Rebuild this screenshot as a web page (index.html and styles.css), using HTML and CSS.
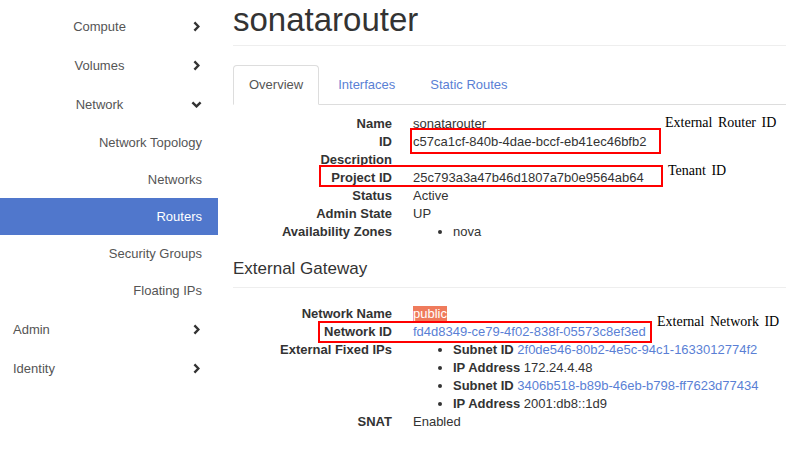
FILE: index.html
```html
<!DOCTYPE html>
<html lang="en">
<head>
<meta charset="utf-8">
<title>sonatarouter</title>
<link rel="stylesheet" href="styles.css">
</head>
<body>
<div class="page">
  <aside class="sidebar">
    <ul class="nav">
      <li class="nav-group centered"><span class="label">Compute</span><span class="chev"><svg width="7" height="11" viewBox="0 0 7 11"><polyline points="1.4,1.4 5.4,5.5 1.4,9.6" fill="none" stroke="#333" stroke-width="2.4"/></svg></span></li>
      <li class="nav-group centered"><span class="label">Volumes</span><span class="chev"><svg width="7" height="11" viewBox="0 0 7 11"><polyline points="1.4,1.4 5.4,5.5 1.4,9.6" fill="none" stroke="#333" stroke-width="2.4"/></svg></span></li>
      <li class="nav-group centered"><span class="label">Network</span><span class="chev"><svg width="11" height="7" viewBox="0 0 11 7"><polyline points="1.4,1.4 5.5,5.4 9.6,1.4" fill="none" stroke="#333" stroke-width="2.4"/></svg></span></li>
      <li class="nav-sub">Network Topology</li>
      <li class="nav-sub">Networks</li>
      <li class="nav-sub active">Routers</li>
      <li class="nav-sub">Security Groups</li>
      <li class="nav-sub last">Floating IPs</li>
      <li class="nav-group"><span class="label">Admin</span><span class="chev"><svg width="7" height="11" viewBox="0 0 7 11"><polyline points="1.4,1.4 5.4,5.5 1.4,9.6" fill="none" stroke="#333" stroke-width="2.4"/></svg></span></li>
      <li class="nav-group"><span class="label">Identity</span><span class="chev"><svg width="7" height="11" viewBox="0 0 7 11"><polyline points="1.4,1.4 5.4,5.5 1.4,9.6" fill="none" stroke="#333" stroke-width="2.4"/></svg></span></li>
    </ul>
  </aside>
  <main class="content">
    <div class="page-header"><h1>sonatarouter</h1></div>
    <ul class="tabs">
      <li><a class="tab active">Overview</a></li>
      <li><a class="tab">Interfaces</a></li>
      <li><a class="tab">Static Routes</a></li>
    </ul>
    <dl class="info first">
      <dt>Name</dt><dd>sonatarouter</dd>
      <dt>ID</dt><dd>c57ca1cf-840b-4dae-bccf-eb41ec46bfb2</dd>
      <dt>Description</dt><dd></dd>
      <dt>Project ID</dt><dd>25c793a3a47b46d1807a7b0e9564ab64</dd>
      <dt>Status</dt><dd>Active</dd>
      <dt>Admin State</dt><dd>UP</dd>
      <dt>Availability Zones</dt><dd><ul class="bullets"><li>nova</li></ul></dd>
    </dl>
    <div class="section-header"><h4>External Gateway</h4></div>
    <dl class="info">
      <dt>Network Name</dt><dd><span class="hl">public</span></dd>
      <dt>Network ID</dt><dd><a class="link">fd4d8349-ce79-4f02-838f-05573c8ef3ed</a></dd>
      <dt>External Fixed IPs</dt>
      <dd>
        <ul class="bullets">
          <li><strong>Subnet ID</strong> <a class="link">2f0de546-80b2-4e5c-94c1-1633012774f2</a></li>
          <li><strong>IP Address</strong> 172.24.4.48</li>
          <li><strong>Subnet ID</strong> <a class="link">3406b518-b89b-46eb-b798-ff7623d77434</a></li>
          <li><strong>IP Address</strong> 2001:db8::1d9</li>
        </ul>
      </dd>
      <dt>SNAT</dt><dd>Enabled</dd>
    </dl>
  </main>
</div>
<div class="annotations">
  <div class="mark mark-id"></div>
  <div class="mark mark-project"></div>
  <div class="mark mark-network"></div>
  <div class="note note-router">External Router ID</div>
  <div class="note note-tenant">Tenant ID</div>
  <div class="note note-network">External Network ID</div>
</div>
</body>
</html>
```

FILE: styles.css
```css
html, body {
  margin: 0;
  padding: 0;
  background: #fff;
}
body {
  font-family: "Liberation Sans", Arial, sans-serif;
  font-size: 13px;
  color: #333;
  position: relative;
  width: 786px;
  height: 462px;
  overflow: hidden;
}
.page {
  display: flex;
  align-items: flex-start;
}
.sidebar {
  width: 218px;
  flex: none;
  padding-top: 7px;
}
.nav {
  list-style: none;
  margin: 0;
  padding: 0;
  color: #555;
}
.nav-group {
  display: flex;
  align-items: center;
  height: 39px;
  padding-left: 13px;
  padding-right: 16px;
}
.nav-group .label {
  flex: 1;
}
.nav-group.centered .label {
  text-align: center;
}
.chev {
  width: 12px;
  margin-left: 4px;
  display: flex;
  justify-content: center;
  align-items: center;
}
.chev svg {
  display: block;
}
.nav-sub {
  height: 37px;
  line-height: 37px;
  text-align: right;
  padding-right: 16px;
}
.nav-sub.last {
  margin-bottom: 1px;
}
.nav-sub.active {
  background: #5077cc;
  color: #fff;
}
.content {
  flex: 1;
  padding-left: 15px;
  min-width: 0;
}
.page-header {
  padding-top: 2px;
  padding-bottom: 7px;
  border-bottom: 1px solid #eee;
}
.page-header h1 {
  margin: 0;
  font-size: 33px;
  line-height: 36px;
  font-weight: normal;
  color: #333;
}
.tabs {
  list-style: none;
  margin: 19px 0 0 0;
  padding: 0;
  display: flex;
  border-bottom: 1px solid #ddd;
}
.tabs li {
  margin-right: 3px;
  margin-bottom: -1px;
}
.tab {
  display: block;
  padding: 10px 15px;
  line-height: 18px;
  border: 1px solid transparent;
  border-radius: 4px 4px 0 0;
  color: #5a7fd5;
}
.tab.active {
  color: #555;
  background: #fff;
  border-color: #ddd #ddd transparent;
}
.info {
  display: grid;
  grid-template-columns: 159px 1fr;
  column-gap: 21px;
  line-height: 18px;
  margin: 17px 0 0 0;
}
.info.first {
  margin-top: 10px;
}
.info dt {
  text-align: right;
  font-weight: bold;
  white-space: nowrap;
}
.info dd {
  margin: 0;
  min-height: 18px;
  white-space: nowrap;
}
.bullets {
  margin: 0;
  padding-left: 40px;
  list-style: disc;
}
.link {
  color: #5a7fd5;
}
.hl {
  background: #ef7b5c;
  color: #fff;
}
.section-header {
  margin-top: 18px;
  padding-bottom: 8px;
  border-bottom: 1px solid #eee;
}
.section-header h4 {
  margin: 0;
  font-size: 17px;
  line-height: 20px;
  font-weight: normal;
  color: #333;
}
.annotations {
  position: absolute;
  left: 0;
  top: 0;
  width: 0;
  height: 0;
}
.mark {
  position: absolute;
  border: 2px solid #f00;
  box-sizing: border-box;
}
.mark-id {
  left: 410px;
  top: 128px;
  width: 251px;
  height: 26px;
}
.mark-project {
  left: 319px;
  top: 165px;
  width: 344px;
  height: 22px;
}
.mark-network {
  left: 318px;
  top: 321px;
  width: 334px;
  height: 22px;
}
.note {
  position: absolute;
  font-family: "Liberation Serif", "Times New Roman", serif;
  font-size: 14px;
  line-height: 16px;
  word-spacing: 2px;
  color: #000;
  white-space: nowrap;
}
.note-router {
  left: 665px;
  top: 115px;
}
.note-tenant {
  left: 668px;
  top: 163px;
}
.note-network {
  left: 657px;
  top: 314px;
}
```
